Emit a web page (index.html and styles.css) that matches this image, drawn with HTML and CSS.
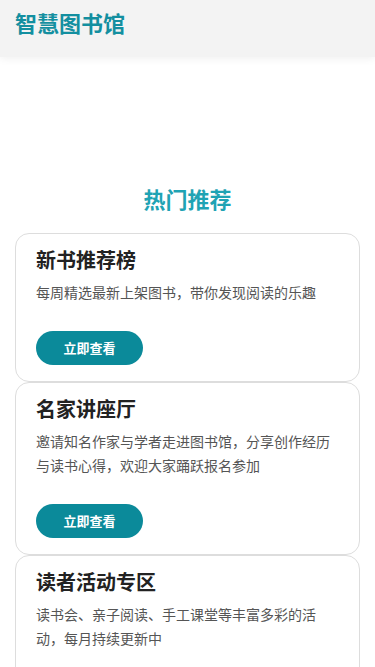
FILE: index.html
```html
<!DOCTYPE html>
<html lang="zh-CN">
<head>
    <meta charset="UTF-8">
    <meta name="viewport" content="width=device-width, initial-scale=1.0">
    <title>智慧图书馆</title>
    <link rel="stylesheet" href="styles.css">
</head>
<body>

    <div class="header">
        <h1 class="logo">智慧图书馆</h1>
    </div>

    <div class="content">
        <h2 class="section-title">热门推荐</h2>

        <div class="card">
            <h3>新书推荐榜</h3>
            <p>每周精选最新上架图书，带你发现阅读的乐趣</p>
            <a href="#" class="btn">立即查看</a>
        </div>

        <div class="card">
            <h3>名家讲座厅</h3>
            <p>邀请知名作家与学者走进图书馆，分享创作经历与读书心得，欢迎大家踊跃报名参加</p>
            <a href="#" class="btn">立即查看</a>
        </div>

        <div class="card">
            <h3>读者活动专区</h3>
            <p>读书会、亲子阅读、手工课堂等丰富多彩的活动，每月持续更新中</p>
            <a href="#" class="btn">立即查看</a>
        </div>
    </div>

</body>
</html>
```

FILE: styles.css
```css
body {
    font-family: 'Noto Sans CJK SC', 'Noto Sans', sans-serif;
    margin: 0;
    padding: 0;
    background-color: #FFFFFF;
}

.header {
    background-color: #F3F3F3;
    padding: 7px 15px 20px;
    box-shadow: 0 2px 8px rgba(0, 0, 0, 0.06);
}

.logo {
    margin: 0;
    font-size: 22px;
    line-height: 30px;
    color: #138FA0; /* teal */
    font-weight: bold;
}

.content {
    padding: 126px 15px 0;
}

.section-title {
    margin: 0 0 20px;
    text-align: center;
    font-size: 22px;
    line-height: 30px;
    color: #1FA3B4;
}

.card {
    border: 1px solid #DDDDDD;
    border-radius: 14px;
    padding: 12px 20px 16px;
}

.card h3 {
    margin: 0 0 6px;
    font-size: 20px;
    line-height: 28px;
    color: #222222;
}

.card p {
    margin: 0 0 27px;
    font-size: 14px;
    line-height: 24px;
    color: #555555;
}

.btn {
    display: inline-block;
    width: 107px;
    height: 34px;
    line-height: 34px;
    text-align: center;
    background-color: #0B8A9A;
    color: #FFFFFF;
    border-radius: 17px;
    font-size: 13px;
    font-weight: bold;
    text-decoration: none;
    vertical-align: top;
}
```
